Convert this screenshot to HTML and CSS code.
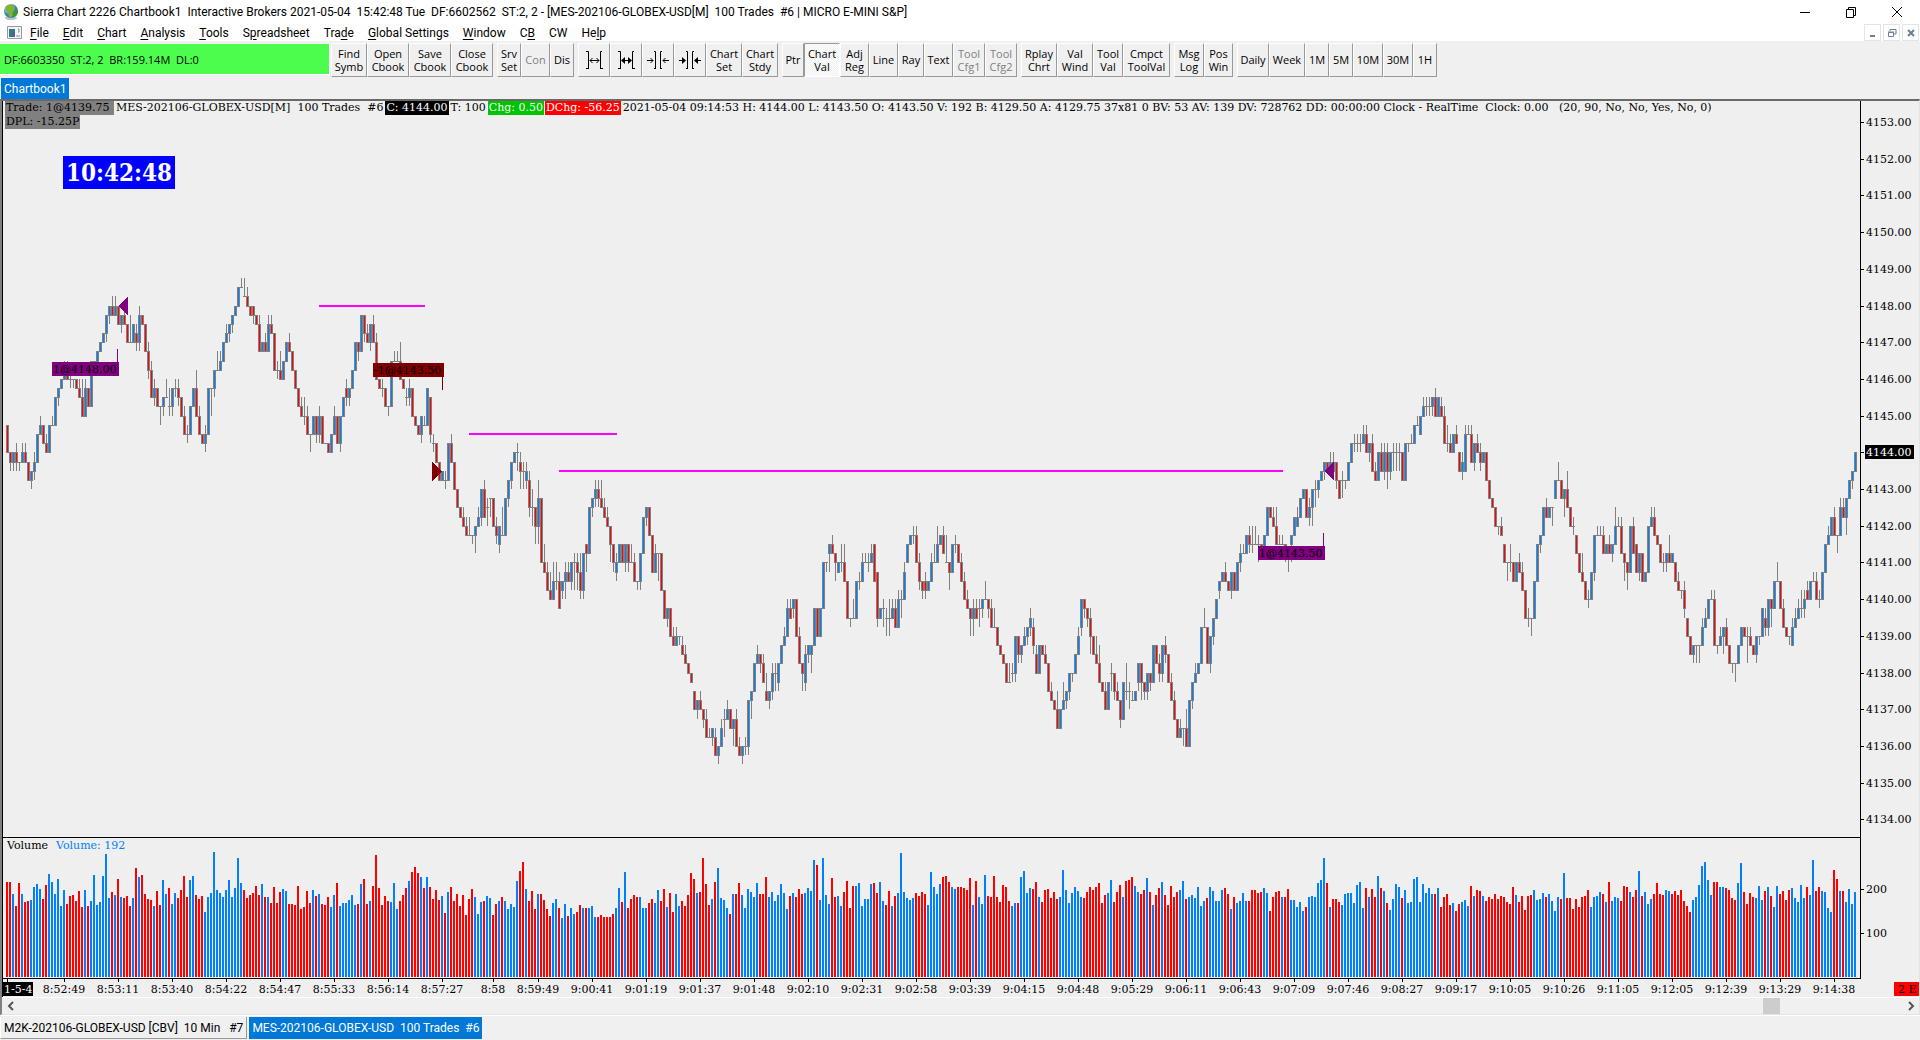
FILE: index.html
```html
<!DOCTYPE html>
<html lang="en">
<head>
<meta charset="utf-8">
<title>Sierra Chart 2226 Chartbook1</title>
<link rel="stylesheet" href="styles.css">
</head>
<body>
<header class="titlebar">
  <svg class="globe" viewBox="0 0 16 18" width="16" height="18"><defs><radialGradient id="sea" cx="35%" cy="30%"><stop offset="0" stop-color="#e6f5ff"/><stop offset="1" stop-color="#2f7fb5"/></radialGradient></defs><ellipse cx="8" cy="15" rx="6" ry="2" fill="#b9c4c8"/><circle cx="8" cy="8" r="7" fill="url(#sea)"/><path d="M3 3Q7 1 10 2L12 5L9 9L10 13L7 15Q5 12 5 9L2 7Z" fill="#7fb52c"/><path d="M12 6L15 8Q15 12 11 14L10 10Z" fill="#4c9426"/></svg>
  <h1 class="title">Sierra Chart 2226 Chartbook1&nbsp; Interactive Brokers 2021-05-04&nbsp; 15:42:48 Tue&nbsp; DF:6602562&nbsp; ST:2, 2 - [MES-202106-GLOBEX-USD[M]&nbsp; 100 Trades&nbsp; #6 | MICRO E-MINI S&amp;P]</h1>
  <div class="win-controls">
    <button aria-label="Minimize"><svg width="12" height="12"><path d="M1 6.5H11"/></svg></button>
    <button aria-label="Restore"><svg width="12" height="12"><path d="M1.500 3.500H8.500V11.500H1.500ZM3.500 3.500V1.500H10.500V9.500H8.500"/></svg></button>
    <button aria-label="Close"><svg width="12" height="12"><path d="M1 1L11 11M11 1L1 11"/></svg></button>
  </div>
</header>
<nav class="menubar">
  <svg class="doc-icon" width="15" height="13"><path d="M.5.5H14.500V12.500H.5Z" fill="#f4f4f4" stroke="#999"/><path d="M2 3H8V11H2Z" fill="#2d7f86"/><path d="M5 5H8V11H5Z" fill="#4763a0"/><path d="M11 3H12V6H11M9 10H13" stroke="#888" fill="none"/></svg>
  <a href="#"><u>F</u>ile</a><a href="#"><u>E</u>dit</a><a href="#"><u>C</u>hart</a><a href="#"><u>A</u>nalysis</a><a href="#"><u>T</u>ools</a><a href="#">S<u>p</u>readsheet</a><a href="#">Tra<u>d</u>e</a><a href="#"><u>G</u>lobal Settings</a><a href="#"><u>W</u>indow</a><a href="#">C<u>B</u></a><a href="#">CW</a><a href="#">He<u>l</u>p</a>
  <div class="mdi-controls">
    <button aria-label="Minimize chart"><svg width="10" height="10"><path d="M2 8H7" stroke-width="2"/></svg></button>
    <button aria-label="Restore chart"><svg width="10" height="10"><path d="M3 3V1.500H9V6H7M1.500 4.500H6.500V8.500H1.500ZM1 4H7" stroke-width="1"/></svg></button>
    <button aria-label="Close chart"><svg width="10" height="10"><path d="M2 2L8 8M8 2L2 8" stroke-width="2"/></svg></button>
  </div>
</nav>
<div class="toolbar">
  <div class="status">DF:6603350&nbsp; ST:2, 2&nbsp; BR:159.14M&nbsp; DL:0</div>
  <div class="group"><button class="w36">Find<br>Symb</button><button class="w42">Open<br>Cbook</button><button class="w42">Save<br>Cbook</button><button class="w42">Close<br>Cbook</button></div>
  <div class="group"><button class="w24">Srv<br>Set</button><button class="w29" disabled>Con</button><button class="w24">Dis</button></div>
  <div class="group">
    <button class="w32" aria-label="Increase bar spacing"><svg width="20" height="20"><path d="M2 1.500H4.500V19M18 1.500H16.500V19M2 18.500H4M17 18.500H19M6 10.500H15M8.500 8L6 10.500L8.500 13M12.500 8L15 10.500L12.500 13"/></svg></button>
    <button class="w32" aria-label="Increase bar width"><svg width="20" height="20"><path d="M2 1.500H4.500V19M18 1.500H16.500V19M2 18.500H4M17 18.500H19M6 10.500H15"/><path class="solid" d="M5 10.500L9 7V14ZM16 10.500L12 7V14Z"/></svg></button>
    <button class="w32" aria-label="Decrease bar spacing"><svg width="22" height="20"><path d="M7 1.500H8.500V19M15 1.500H13.500V19M7 18.500H8M14 18.500H15M0 10.500H6M3.500 8L6 10.500L3.500 13M16 10.500H22M18.500 8L16 10.500L18.500 13"/></svg></button>
    <button class="w32" aria-label="Decrease bar width"><svg width="22" height="20"><path d="M7 1.500H8.500V19M15 1.500H13.500V19M7 18.500H8M14 18.500H15M0 10.500H6M16 10.500H22"/><path class="solid" d="M7 10.500L3 7V14ZM15 10.500L19 7V14Z"/></svg></button>
    <button class="w36">Chart<br>Set</button><button class="w36">Chart<br>Stdy</button></div>
  <div class="group"><button class="w22">Ptr</button><button class="w36 pressed">Chart<br>Val</button><button class="w29">Adj<br>Reg</button><button class="w29">Line</button><button class="w26">Ray</button><button class="w29">Text</button><button class="w32" disabled>Tool<br>Cfg1</button><button class="w32" disabled>Tool<br>Cfg2</button></div>
  <div class="group"><button class="w36">Rplay<br>Chrt</button><button class="w36">Val<br>Wind</button><button class="w30">Tool<br>Val</button><button class="w47">Cmpct<br>ToolVal</button></div>
  <div class="group"><button class="w30">Msg<br>Log</button><button class="w29">Pos<br>Win</button></div>
  <div class="group"><button class="w32">Daily</button><button class="w36">Week</button><button class="w24">1M</button><button class="w24">5M</button><button class="w30">10M</button><button class="w30">30M</button><button class="w24">1H</button></div>
</div>
<div class="books"><button class="tab active">Chartbook1</button></div>
<main class="chart-window">
  <div class="chart">
    <svg id="plot" role="img" aria-label="MES price and volume chart"></svg>
    <div class="readout">
      <div class="readout-line"><span class="pos">Trade: 1@4139.75&nbsp;</span><span>MES-202106-GLOBEX-USD[M]&nbsp; 100 Trades&nbsp; #6</span><span class="last">C: 4144.00</span><span>T: 100</span><span class="up">Chg: 0.50</span><span class="down">DChg: -56.25</span><span>2021-05-04 09:14:53 H: 4144.00 L: 4143.50 O: 4143.50 V: 192 B: 4129.50 A: 4129.75 37x81 0 BV: 53 AV: 139 DV: 728762 DD: 00:00:00 Clock - RealTime&nbsp; Clock: 0.00&nbsp;&nbsp; (20, 90, No, No, Yes, No, 0)</span></div>
      <div class="readout-line"><span class="pos">DPL: -15.25P</span></div>
      <time class="clock">10:42:48</time>
    </div>
  </div>
  <div class="scrollbar">
    <button aria-label="Scroll left"><svg width="8" height="10"><path d="M6 1L2 5L6 9"/></svg></button>
    <div class="track"><div class="thumb"></div></div>
    <button aria-label="Scroll right"><svg width="8" height="10"><path d="M2 1L6 5L2 9"/></svg></button>
  </div>
</main>
<footer class="chart-tabs"><button class="tab">M2K-202106-GLOBEX-USD [CBV]&nbsp; 10 Min&nbsp;&nbsp; #7</button><button class="tab active">MES-202106-GLOBEX-USD&nbsp; 100 Trades&nbsp; #6</button></footer>
<script src="chart.js"></script>
</body>
</html>
```

FILE: styles.css
```css
* { box-sizing: border-box; }
body {
  margin: 0;
  height: 100vh;
  display: flex;
  flex-direction: column;
  overflow: hidden;
  background: #f0f0f0;
  color: #000;
  font: 12px/16px Roboto, "Open Sans", sans-serif;
}
button { font: inherit; color: inherit; border: 0; padding: 0; background: none; }
a { color: inherit; text-decoration: none; }
svg { display: block; }

.titlebar { display: flex; align-items: center; height: 24px; padding-left: 3px; gap: 4px; background: #fff; }
.title { flex: 1; margin: 0; font-size: 12px; font-weight: 400; white-space: nowrap; }
.win-controls { display: flex; }
.win-controls button { width: 46px; height: 20px; display: grid; place-items: center; }
.win-controls path { fill: none; stroke: #000; }

.menubar { display: flex; align-items: center; height: 17px; padding-left: 7px; gap: 14px; background: #fff; font-size: 12px; white-space: nowrap; }
.doc-icon { margin-right: -6px; }
.menubar u { text-underline-offset: 2px; }
.mdi-controls { display: flex; gap: 2px; margin-left: auto; padding-right: 1px; }
.mdi-controls button { width: 17px; height: 17px; display: grid; place-items: center; border: 1px solid #e4e4e4; }
.mdi-controls path { fill: none; stroke: #6d7f91; }

.toolbar { display: flex; align-items: center; gap: 4px; height: 36px; padding-top: 1px; font: 11px/13px "Open Sans", "Noto Sans", sans-serif; }
.status { width: 330px; height: 31px; margin-right: -3px; padding: 9px 4px; background: #4dfd4d; border: solid #fff; border-width: 0 1px 1px 0; white-space: nowrap; }
.group { display: flex; }
.group button { height: 34px; display: grid; place-items: center; align-content: center; border: solid; border-width: 1px; border-color: #fff #999 #999 #fff; white-space: nowrap; }
.group button:disabled { color: #808080; }
.group .pressed { background: repeating-conic-gradient(#fff 0 25%, #f0f0f0 0 50%) 0 0 / 2px 2px; border-color: #999 #fff #fff #999; }
.group path { fill: none; stroke: #000; }
.group .solid { fill: #000; stroke: none; }
.w22 { width: 22px; } .w24 { width: 24px; } .w26 { width: 26px; }
.w29 { width: 29px; } .w30 { width: 30px; } .w32 { width: 32px; }
.w36 { width: 36px; } .w42 { width: 42px; } .w47 { width: 47px; }

.books { height: 22px; padding: 1px; }
.tab { height: 21px; padding: 0 3px; white-space: nowrap; }
.tab.active { background: #0078d7; color: #fff; }

.chart-window { flex: 1; min-height: 0; display: flex; flex-direction: column; border: solid; border-width: 2px 1px 1px 2px; border-color: #696969 #e3e3e3 #e3e3e3 #808080; }
.chart { position: relative; flex: 1; min-height: 0; border-left: 1px solid #000; background: #efefef; font: 11px/14px "DejaVu Serif", serif; }
#plot { width: 100%; height: 100%; }
.readout { position: absolute; top: 0; left: 2px; }
.readout-line { display: flex; gap: 1px; white-space: nowrap; }
.readout-line span { padding: 0 1px; }
.readout-line .pos { background: #808080; }
.readout-line .last { background: #000; color: #fff; }
.readout-line .up { background: #00c400; color: #fff; }
.readout-line .down { background: #f00; color: #fff; }
.clock { display: inline-block; margin: 27px 0 0 58px; padding: 0 3px; background: #00f; color: #fff; font: 700 24px/33px "DejaVu Serif Condensed", "DejaVu Serif", serif; }

#plot text { fill: #000; }
#plot .mid { text-anchor: middle; }
#plot .inv { fill: #fff; }
#plot .vol-label { fill: #0080ff; }
#plot path, #plot rect { shape-rendering: crispEdges; }
.blue { fill: #0080ff; } .red { fill: #f00; } .gray { fill: #808080; }
.black { fill: #000; } .magenta { fill: #f0f; } .purple { fill: #800080; } .maroon { fill: #800000; }

.scrollbar { display: flex; align-items: center; height: 17px; border-top: 1px solid #fff; }
.scrollbar button { width: 17px; height: 16px; display: grid; place-items: center; }
.scrollbar path { fill: none; stroke: #555; stroke-width: 2; }
.track { flex: 1; height: 16px; padding-left: 91%; }
.thumb { width: 17px; height: 16px; background: #cdcdcd; }

.chart-tabs { display: flex; height: 25px; gap: 2px; padding-top: 1px; border-top: 1px solid #fff; }
.chart-tabs .tab { height: 22px; }
.chart-tabs .tab:not(.active) { border: solid; border-width: 0 1px 1px 1px; border-color: #fff #999 #999 #fff; }
```

FILE: chart.js
```js
// Candles: close level in quarter-point ticks above 4134.00, with optional
// "open>" when it differs from the previous close and ".UD" wick lengths.
const CANDLES = `43>40 39.01 40.01 39.11 39.01 40.10 39.10 37 38.01 39.11 42 43.10 41 40.10 43 43.10 46 47.01 48 49.10
48.10 48.11 48.01 47 46.10 44.20 47.10 45 50 50 51 52 53 55.01 56.01 55.10 56.10 54 55.01 54.10
52 52.30 54 53>52.11 55.11 54 51 49.11 46.10 47.11 45 45.02 46.01 46.20 45>45.21 47.01 47.11 46.11 44 42.10
42.11 45 47 44.20 42.10 41 42.11 47 47.03 49.01 49.20 50.10 52 53.10 54.01 55.01 56 58 58.10 57>57.20
56.10 55 56>55.01 54 51.10 52 51.10 54.10 53.10 49 49.11 48.20 50 52 51.10 49 47 45 44.10 44.21
42.10 42.02 44 42.01 44.11 41 41 40 42 44.10 41 44.01 46 47>46.11 47.01 49 52 51.01 55 53.01
52.10 54.01 52.10 48.10 47 47.11 45 45.01 50 50.10 50.10 48.20 47 46>46.11 47.11 44 43 42 44.01 43>43.10
47 46>42.01 41>41.11 39 37 38 37>37.11 41 39.10 36 34 33 32.10 31.10 31.20 31.01 32.02 33.10 36.01 33.10
34>34.12 35>35.02 32 31.11 30>32.01 31>31.30 35 37.01 39.01 40 40.12 39>38.12 38.12 37>38.11 37>34.11 34.22 32.02 35.22 28 27.20
25.10 24.20 26.20 26.21 23.10 25>26.01 27.12 26.10 28.01 28.13 27.12 25.21 29.01 30>29.02 34 35.01 36.11 35.11 34.20 33.10
32.10 30.02 28.01 27>28.11 30 28 30.01 28.01 28.20 26.10 26.01 29.01 33 34.01 31 27 29.10 29.03 25 22
23.01 20 19.10 20.10 20.01 19>18.10 17.10 16 15 14>12 13.01 12.10 11.01 9.10 9.10 10.01 9>7.10 8.01 10.10 11>11.12
12.10 10 11.02 8.10 7.10 8.01 8.11 13.01 14.02 17 18.10 17.01 15.10 14>13.20 14.01 16.11 16.12 15>17.01 19 20.10
23.10 22.10 23>24.01 20 17.10 17>16.02 15>18.11 19.01 18>19.02 23 20 23 28 28.01 29>30.02 29.10 29>28.02 27>28 28.21 26.20
22 22.01 22.20 26 26.11 28.10 28.10 28.11 29.10 30>26 27>22.01 23 23.12 22>22.12 22.22 23.10 21.10 24.10 24.12 27.10
28>30 31 31.11 28.10 26.11 25.01 26>25.11 26 28.10 28.20 30.20 31 31>29.10 28>28.30 27.02 30 30.11 28 26.10 24.10
23.10 22.02 23.12 22.10 23>23.12 24.01 24.20 23.01 21.10 21.20 19 18 17 15 15.20 16>16.11 20.01 18.01 19.01 20.10
21.01 22.11 21>19.11 18>16.10 19 18 17.10 14 13.10 12 10.20 12 13.20 14.01 16.01 16.01 18 20.10 21>24.01 23.01
22.01 20.12 18 17.20 15.20 14 12.10 15 16>16.12 14.01 13.10 11.01 15 14>14.31 14.12 13>13.10 14 15>17.01 15.02 14.01
16.01 15.01 19 17 16.11 19.01 18.11 15 13.10 11.10 9 10.10 10.02 8.20 13 15.01 16.10 17 21 21.20
17 20.01 22.01 24 25>26.01 27 26.10 25 27.01 25 28 29.11 29.10 31 30.11 30.21 30.20 30.12 29 31
34 33 32.10 32>30.20 30.10 30.10 29.01 29.02 30>31.02 33 32>33.10 35 36 33 34.11 36.02 36.12 37.01 38 39.01
38 39.10 38.10 39>37.01 35 37>37.12 37.01 39 41 41.11 41.11 41.11 42.10 40.10 41.01 38.10 37.10 40 38.10 40.11
38.12 40.01 40.12 40.12 40.12 37 41 41.01 41.10 43 43.10 42>44 45.10 45.11 45.11 46.01 44.10 46 45>44.10 41.10
41.21 40.10 42 41.10 40>38 39.11 38>42.10 42.10 39.10 41.01 40.10 39.11 40 37 35 34 32 32.01 31.10 30>28
28.02 28.21 26 28 27.10 25.10 22 22.11 22.02 26 30 31.01 34 33.10 34 34.02 35>37 37.20 35 36.02
34.20 32 32.11 31>29 27 26.20 24 24.11 27 31.01 31.10 31.10 29.10 30 29.10 30.01 32.20 32.10 29.10 28.02
27.02 32 29.10 30>27 29.01 26 27 32 33.10 31.10 30 28 28.11 29.01 28.20 29 28>26 25.10 25.01 23.11
22>20 18 19.01 19.02 19.02 21.10 22.10 24 24.10 19.10 19.01 20.10 21.02 19.10 17 17.01 17.02 19 21 20
20.13 19.10 18 20.01 20.01 23 22>21.11 24.01 23.02 26 26.20 23 21.10 20 20.01 19>21.10 22.10 23.10 23.21 24.11
25>24.10 26 26.10 24.10 24.11 27 30 31.10 33 31.10 31.02 34.10 33.10 35.02 37 38.01 40`;

// Volume bars: direction (r/b) and top of the bar in thirds of a pixel.
const VOLUME = `r159 r159 b195 r231 r162 b195 r219 r216 b213 b174 b165 b180 r210 r168 b135 b159 b195 b150 b231 b183
r225 r201 r198 r216 r186 r234 b183 r231 b216 b138 b228 b219 b141 b75 b207 r189 b198 r150 b204 r207
r201 r231 b207 r117 b144 r138 r195 r210 r213 b231 r186 r228 b153 b195 r177 b225 b192 r207 r183 r141
r204 b153 b141 r198 r210 r201 b249 b204 b192 b69 b183 b192 b204 b183 b153 b204 b177 b87 b162 r183
r207 r198 r192 r171 r198 b165 r204 b204 r222 r174 r222 r189 b180 b186 r225 r225 r228 r171 r240 r234
r186 r222 b183 r201 b195 r225 r228 r204 b234 b198 r162 b231 b222 b222 b213 b198 b228 r225 b165 r150
r225 b216 r171 r78 r177 r228 r201 r216 b219 b162 b240 r216 r198 r177 b156 r129 r114 r132 b144 r177
b144 r174 r210 r183 r213 b201 r252 b189 r174 r216 r195 r231 r198 r258 r210 r180 b204 b255 b219 r216
b201 b207 r258 r225 b216 r204 b216 b240 b225 b234 b156 r126 r99 b180 r216 r186 r240 b195 r195 r213
r240 r261 b222 b210 r237 b267 b225 r261 b237 b255 r249 r228 b237 r237 b237 b231 b264 r264 r258 r264
r264 r264 r255 b237 b177 r219 b129 r237
r210 r198 r204 b204 b237 b237 r222 r210 b222 b183 r216 r180 b234 r192 r249 b195 b231 r216 r231 r198
r132 r150 b192 r189 r87 r165 r228 b210 r159 b117 b207 b213 b237 r255 b195 r195 r162 b198 b237 b180
b189 b204 b162 r195 r195 r144 b204 b189 b216 b198 b165 b192 b240 r201 b192 r204 r180 r195 b192 b177
b186 b93 r108 b213 b87 b198 b225 r147 r204 b201 b231 r189 r156 r237 r171 b171 b162 b231 b210 b210
b165 r162 r192 b159 b216 r228 r186 b231 r201 b192 b72 b189 b207 b213 b207 r192 r201 r189 r195 b228
b129 b174 b195 b165 r144 r141 r159 b174
b180 r174 r174 r177 r183 r147 b228 r156 b204 b225 b138 r201 r204 r141 r204 r219 r168 r174 r216 b231
b222 r222 b144 b126 b192 b177 r180 r159 b204 r219 r183 r180 r207 r189 r210 b204 b123 b183 b222 b192
b174 b186 b204 r207 r189 r174 r183 r174 r162 r222 r198 b192 b153 r219 r189 r168 b204 r156 r153 r144
b171 b189 r195 r183 b147 r189 b228 r198 r177 b159 r198 r228 r171 r204 r189 b183 b156 r210 b204 b198
b207 b174 b231 b216 r207 b174 b186 b216 b216 b183 r177 r195 b240 r204 b222 b216 b192 b216 r216 r183
r183 r192 r189 b177 b192 r246 r204 r189 r186
b204 r204 r180 b213 b213 b234 b219 b246 r234 b204 b201 b204 b162 b153 b87 r162 b234 r210 r210 r219
b228 b195 b192 b192 b222 b168 b159 b237 r177 b204 r180 r204 b141 r177 b186 r222 b243 b210 b165 b174
r207 b183 b222 b219 b150 b144 b219 b165 b192 b177 b195 r195 b177 r234 r204 r195 r228 b222 r246 r225
b219 b213 b231 r171 b201 r183 r186 b201 r216 r204 r210 r195 r210 r201 r204 r219 r225 r174 b198 r219
r201 r243 r201 r198 b183 b213 b210 b192 r204 b195 b216 b246 b204 r210 b132 r207 r207 r240 r210 r234
r204 r201 r183 b234 b204 b201 b189 r195 b219 r159 b216 b204 b207 r216 r171 r174 b189 r204 r183 b126
r201 b189 b225 b210 r195 r162 r195 r198 b183 b186 r195 r186 r198 r183 r216 r231 r249 b213 b204 b168
b111 b99 b153 b198 r159 r159 b174 b174 r177 r183 r207 r213 b162 b102 r189 r225 r192 r204 b207 b171
b213 r186 b174 r201 b234 b171 r195 r186 r213 r183 b177 b207 b219 b168 b207 r174 b198 b93 r186 r174
b186 b189 b237 b249 r123 r150 b186 r186 b219 b180 b225 b189`;

const TIMES = [[19, "8:52:49"], [37, "8:53:11"], [55, "8:53:40"], [73, "8:54:22"], [91, "8:54:47"],
  [109, "8:55:33"], [127, "8:56:14"], [145, "8:57:27"], [162, "8:58"], [177, "8:59:49"], [195, "9:00:41"]];
["9:01:19", "9:01:37", "9:01:48", "9:02:10", "9:02:31", "9:02:58", "9:03:39", "9:04:15", "9:04:48",
  "9:05:29", "9:06:11", "9:06:43", "9:07:09", "9:07:46", "9:08:27", "9:09:17", "9:10:05", "9:10:26",
  "9:11:05", "9:12:05", "9:12:39", "9:13:29", "9:14:38"].forEach((t, n) => TIMES.push([213 + n * 18, t]));

const AXIS = 58, FOOT = 19;

function draw() {
  const svg = document.getElementById("plot");
  const { width, height } = svg.getBoundingClientRect();
  const W = Math.round(width), H = Math.round(height);
  const right = W - AXIS, base = H - FOOT;
  const split = Math.round(base * 0.839);
  const pitch = right / 619.300;
  const X = i => Math.round(4 + i * pitch);
  const tick = split / 80.200;
  const Y = level => Math.round(21 + (76 - level) * tick);
  const vol = (base - split) / 141;
  const paths = { blue: "", red: "", gray: "" };
  const box = (x, y, w, h) => `M${x} ${y}h${w}v${h}h${-w}z`;
  const out = [];
  const rect = (cls, x, y, w, h) => out.push(`<rect class="${cls}" x="${x}" y="${y}" width="${w}" height="${h}"/>`);
  const text = (cls, x, y, s) => out.push(`<text class="${cls}" x="${x}" y="${y}">${s}</text>`);

  let prev = 0, fills = { blue: "", red: "" };
  CANDLES.split(/\s+/).forEach((tok, i) => {
    const m = tok.match(/^(?:(\d+)>)?(\d+)(?:\.(\d)(\d))?$/);
    const close = +m[2], open = m[1] ? +m[1] : prev;
    const hi = Math.max(open, close), lo = Math.min(open, close);
    const x = X(i), top = Y(hi), bottom = Y(lo);
    paths.gray += box(x - 1, top, 3, bottom - top + 1);
    if (m[3]) paths.gray += box(x, Y(hi + +m[3]), 1, Y(lo - m[4]) - Y(hi + +m[3]));
    if (hi > lo) fills[close > open ? "blue" : "red"] += box(x, top + 1, 1, bottom - top - 1);
    prev = close;
  });
  VOLUME.split(/\s+/).forEach((tok, i) => {
    const h = Math.round((444 - tok.slice(1)) / 3 * vol);
    paths[tok[0] === "r" ? "red" : "blue"] += box(X(i) - 1, base - 1 - h, 2, h);
  });
  out.push(`<path class="gray" d="${paths.gray}"/>`);
  for (const c of ["blue", "red"]) out.push(`<path class="${c}" d="${fills[c] + paths[c]}"/>`);

  // Frame and axes
  rect("black", 0, split, right, 1);
  rect("black", 0, base, right, 1);
  rect("black", right - 1, 0, 1, base + 1);
  for (let p = 4134; p <= 4153; p++) {
    const y = Y((p - 4134) * 4);
    rect("black", right, y, 3, 1);
    if (p === 4144) rect("black", right + 4, y - 7, 49, 14);
    text(p === 4144 ? "inv" : "", right + 5, y + 4, p + ".00");
  }
  [100, 200].forEach(v => {
    const y = Math.round(base - 1 - v * 0.440 * vol);
    rect("black", right, y, 3, 1);
    text("", right + 5, y + 4, v);
  });
  rect("black", X(0), base, 1, 4);
  TIMES.forEach(([i, s]) => { rect("black", X(i), base, 1, 4); text("mid", X(i), base + 15, s); });
  rect("black", 0, base + 4, 30, 14);
  text("inv", 1, base + 15, "1-5-4");
  rect("red", W - 25, base + 4, 25, 14);
  text("", W - 21, base + 15, "2 E");
  text("", 4, split + 12, "Volume");
  text("vol-label", 53, split + 12, "Volume: 192");

  // Drawn levels and order fills
  [[104, 139, 56], [154, 203, 42], [184, 425, 38]].forEach(([a, b, l]) => rect("magenta", X(a), Y(l) - 1, X(b) - X(a) + 1, 2));
  const arrow = (cls, i, l, d) => out.push(`<path class="${cls}" d="M${X(i)} ${Y(l)}l${d} -9v19z"/>`);
  arrow("purple", 37, 56, 10);
  arrow("maroon", 145, 38, -10);
  arrow("purple", 439, 38, 10);
  const tag = (cls, i, y, w, s, up) => {
    rect(cls, X(i), y, w, 14);
    rect(cls, X(i) + w - 2, up ? y - 13 : y + 14, 1, 13);
    text("", X(i) + 1, y + 11, s);
  };
  tag("purple", 15, Y(49) - 8, 67, "1@4148.00", true);
  tag("maroon", 122, Y(49) - 7, 71, "-1@4143.50", false);
  tag("purple", 417, Y(29) - 7, 67, "1@4143.50", true);
  svg.innerHTML = out.join("");
}
draw();
addEventListener("resize", draw);
```
